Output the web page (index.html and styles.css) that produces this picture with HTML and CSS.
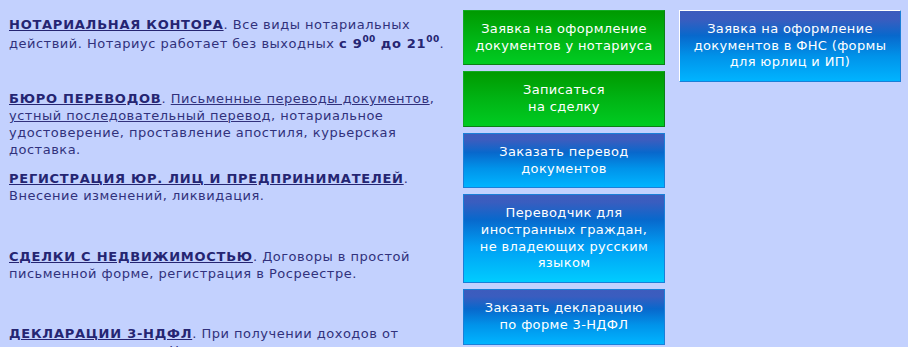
FILE: index.html
```html
<!DOCTYPE html>
<html lang="ru">
<head>
<meta charset="utf-8">
<title>Нотариальная контора</title>
<link rel="stylesheet" href="styles.css">
</head>
<body>
<div class="page">
  <div class="info">
    <p class="item item1"><a class="head" href="#">НОТАРИАЛЬНАЯ КОНТОРА</a>. Все виды нотариальных действий. Нотариус работает без выходных <b>с 9<sup>00</sup> до 21<sup>00</sup></b>.</p>
    <p class="item item2"><a class="head" href="#">БЮРО ПЕРЕВОДОВ</a>. <a class="link" href="#">Письменные переводы документов</a>, <a class="link" href="#">устный последовательный перевод</a>, нотариальное удостоверение, проставление апостиля, курьерская доставка.</p>
    <p class="item item3"><a class="head" href="#">РЕГИСТРАЦИЯ ЮР. ЛИЦ И ПРЕДПРИНИМАТЕЛЕЙ</a>. Внесение изменений, ликвидация.</p>
    <p class="item item4"><a class="head" href="#">СДЕЛКИ С НЕДВИЖИМОСТЬЮ</a>. Договоры в простой письменной форме, регистрация в Росреестре.</p>
    <p class="item item5"><a class="head" href="#">ДЕКЛАРАЦИИ 3-НДФЛ</a>. При получении доходов от продажи имущества. Налоговые вычеты при покупке жилья.</p>
  </div>
  <div class="buttons">
    <a class="btn green" href="#">Заявка на оформление<br>документов у нотариуса</a>
    <a class="btn green" href="#">Записаться<br>на сделку</a>
    <a class="btn blue" href="#">Заказать перевод<br>документов</a>
    <a class="btn blue tall" href="#">Переводчик для<br>иностранных граждан,<br>не владеющих русским<br>языком</a>
    <a class="btn blue" href="#">Заказать декларацию<br>по форме 3-НДФЛ</a>
  </div>
  <div class="side">
    <a class="btn blue wide" href="#">Заявка на оформление<br>документов в ФНС (формы<br>для юрлиц и ИП)</a>
  </div>
</div>
</body>
</html>
```

FILE: styles.css
```css
html, body {
  margin: 0;
  padding: 0;
  background: #c3d1fe;
  overflow: hidden;
}
body {
  font-family: "DejaVu Sans", Verdana, sans-serif;
  font-size: 13px;
  color: #31317c;
}
.page {
  display: flex;
  align-items: flex-start;
  padding: 10px 0 0 9px;
}
.info {
  width: 444px;
  flex: none;
  letter-spacing: 0.5px;
}
.item {
  margin: 0;
  line-height: 17px;
}
.item1 { margin-top: 5px; line-height: 19px; }
.item2 { margin-top: 37px; }
.item3 { margin-top: 12px; }
.item4 { margin-top: 44px; }
.item5 { margin-top: 43px; }
.head {
  font-weight: bold;
  color: #252572;
  text-decoration: underline;
  letter-spacing: 0.75px;
}
.link {
  color: #31317c;
  text-decoration: underline;
}
b {
  color: #252572;
  letter-spacing: 0.7px;
}
sup {
  font-size: 9px;
  line-height: 0;
  vertical-align: 6px;
  letter-spacing: 0.3px;
}
.buttons {
  margin-left: 10px;
  width: 202px;
  flex: none;
  display: flex;
  flex-direction: column;
  gap: 6px;
}
.side {
  margin-left: 14px;
  width: 222px;
  flex: none;
}
.btn {
  display: flex;
  align-items: center;
  justify-content: center;
  text-align: center;
  box-sizing: border-box;
  color: #ffffff;
  text-decoration: none;
  font-size: 13px;
  letter-spacing: 0.35px;
  line-height: 16.7px;
  padding: 10px 2px;
  min-height: 55px;
}
.green {
  background: linear-gradient(to bottom, #009a00 0%, #00b414 50%, #00cc22 100%);
  border: 1px solid #11aa22;
  border-bottom-color: #0c7f16;
  border-right-color: #0c7f16;
}
.blue {
  background: linear-gradient(to bottom, #3d5cbd 0%, #3a5dbf 12%, #0868cc 35%, #0093ea 65%, #00b4ff 100%);
  border: 1px solid #1a7fd8;
}
.tall {
  background: linear-gradient(to bottom, #3d5cbd 0%, #3a5dbf 8%, #0868cc 28%, #00a0f4 60%, #00ccff 100%);
  min-height: 89px;
}
.wide {
  min-height: 72px;
  border-top-color: #ffffff;
  border-left-color: #ffffff;
  border-right-color: #1a7fd8;
  border-bottom-color: #1a7fd8;
}
```
